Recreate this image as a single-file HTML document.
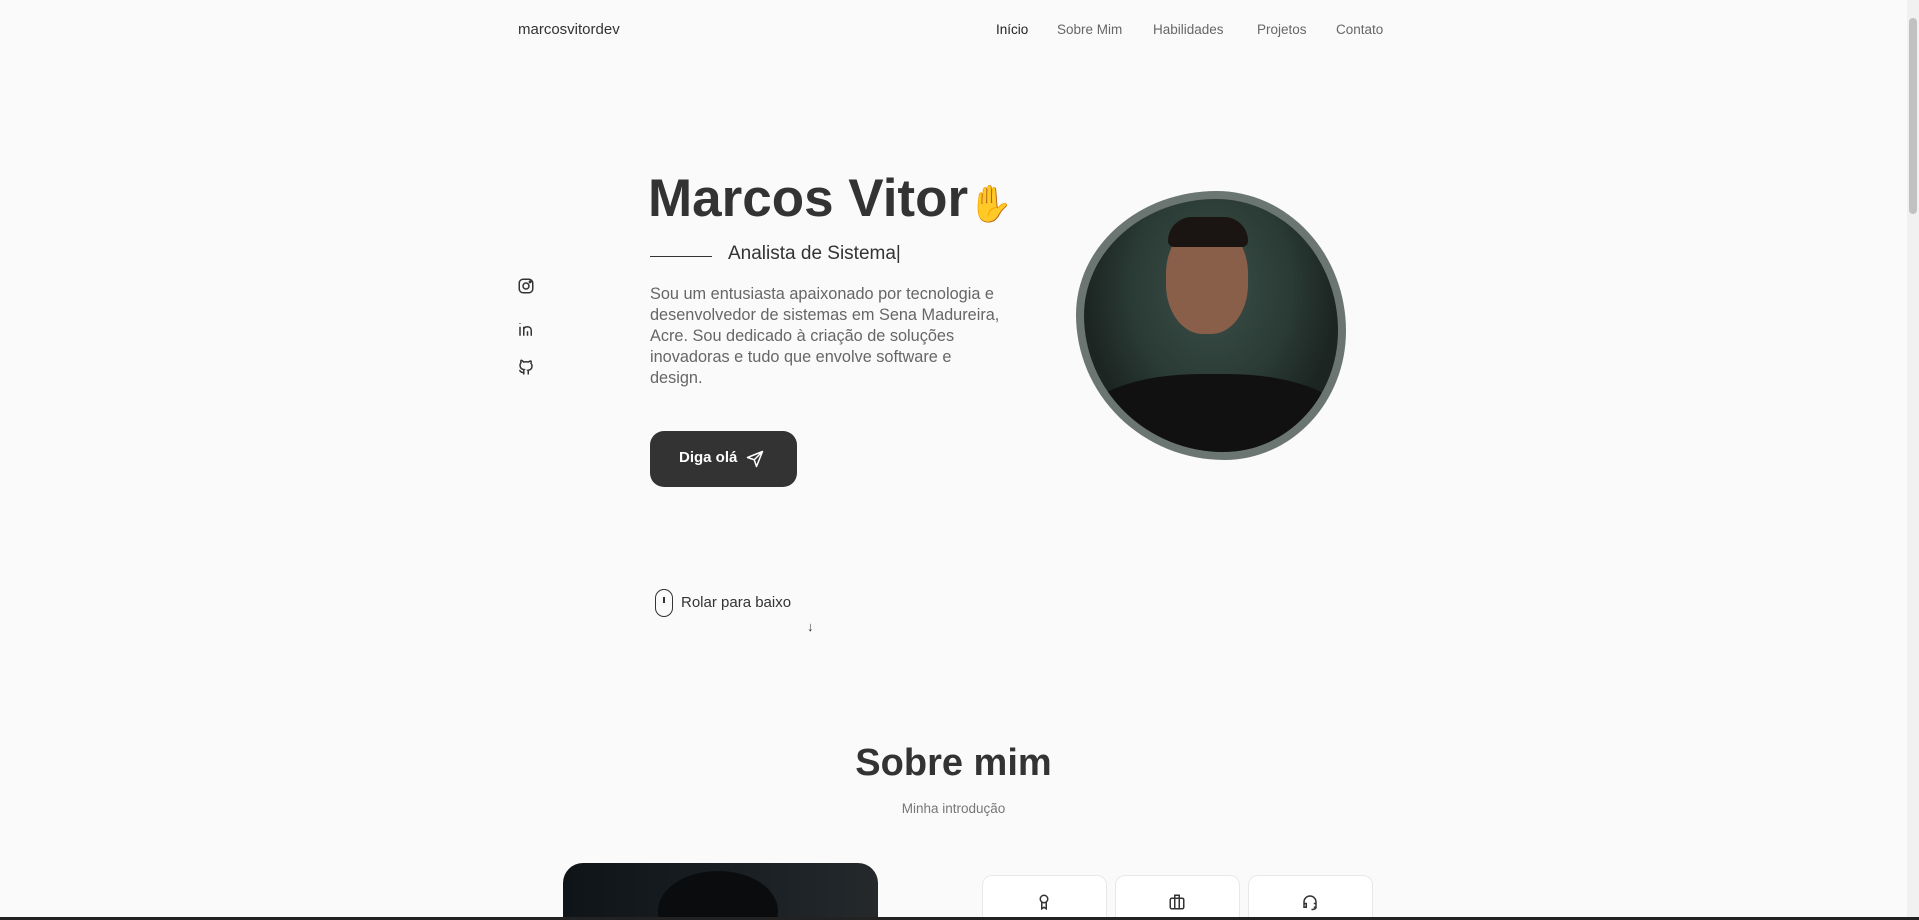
<!DOCTYPE html>
<html style="height:920px;overflow:hidden"><head><meta charset="utf-8"><style>
*{margin:0;padding:0;box-sizing:border-box}
body{width:1919px;height:920px;overflow:hidden;background:#fafafa;font-family:"Liberation Sans",sans-serif;color:#333;position:relative}
.a{position:absolute;white-space:nowrap}
.nav a{position:absolute;top:22px;font-size:13.5px;color:#666;text-decoration:none}
</style></head><body>
<div class="a" style="left:518px;top:21px;font-size:15px;color:#333">marcosvitordev</div>
<div class="nav">
<a style="left:996px;color:#222">Início</a>
<a style="left:1057px">Sobre Mim</a>
<a style="left:1153px">Habilidades</a>
<a style="left:1257px">Projetos</a>
<a style="left:1336px">Contato</a>
</div>
<div class="a" style="left:648px;top:168px;font-size:53px;font-weight:bold;color:#333">Marcos Vitor<span style="font-size:36px;color:#f5c542">✋</span></div>
<div class="a" style="left:650px;top:256px;width:62px;height:1px;background:#333"></div>
<div class="a" style="left:728px;top:243px;font-size:19px;color:#333">Analista de Sistema<span style="font-weight:300">|</span></div>
<div class="a" style="left:650px;top:284px;width:352px;white-space:normal;font-size:16.3px;line-height:21px;color:#666">Sou um entusiasta apaixonado por tecnologia e desenvolvedor de sistemas em Sena Madureira, Acre. Sou dedicado à criação de soluções inovadoras e tudo que envolve software e design.</div>
<div class="a" style="left:650px;top:431px;width:147px;height:56px;background:#333;border-radius:14px;color:#fff;font-size:15px;font-weight:bold;padding:18px 0 0 29px">Diga olá
<svg style="position:absolute;left:96px;top:19px" width="18" height="18" viewBox="0 0 24 24" fill="none" stroke="#fff" stroke-width="2" stroke-linejoin="round"><path d="M22 2L2 10l9 3 3 9z M11 13l11-11"/></svg></div>
<svg class="a" style="left:517px;top:277px" width="18" height="18" viewBox="0 0 24 24" fill="none" stroke="#333" stroke-width="2"><rect x="3" y="3" width="18" height="18" rx="5"/><circle cx="12" cy="12" r="4"/><circle cx="17.5" cy="6.5" r="1" fill="#333"/></svg>
<svg class="a" style="left:517px;top:320px" width="18" height="18" viewBox="0 0 24 24" fill="none" stroke="#333" stroke-width="2"><path d="M4 9v12M4 4v1M9 21V9M9 13c0-3 2-4 5-4s5 2 5 5v7M14 21v-6"/></svg>
<svg class="a" style="left:517px;top:358px" width="18" height="18" viewBox="0 0 24 24" fill="none" stroke="#333" stroke-width="2"><path d="M9 19c-4 1.5-4-2-6-2.5M15 22v-3.5c0-1 .1-1.4-.5-2 2.8-.3 5.5-1.4 5.5-6a4.6 4.6 0 0 0-1.3-3.2 4.2 4.2 0 0 0-.1-3.2s-1.1-.3-3.5 1.3a12 12 0 0 0-6.2 0C6.5 2.8 5.4 3.1 5.4 3.1a4.2 4.2 0 0 0-.1 3.2A4.6 4.6 0 0 0 4 9.5c0 4.6 2.7 5.7 5.5 6-.6.6-.6 1.2-.5 2V22"/></svg>
<div class="a" style="left:1076px;top:191px;width:270px;height:269px;border-radius:52% 48% 45% 55%/46% 52% 48% 54%;background:#6b7572;padding:8px">
<div style="width:100%;height:100%;border-radius:52% 48% 45% 55%/46% 52% 48% 54%;background:radial-gradient(ellipse at 50% 35%,#3c5048 0%,#2a3a35 45%,#1c2522 70%),#223;overflow:hidden;position:relative">
<div style="position:absolute;left:82px;top:25px;width:82px;height:110px;border-radius:45%;background:#8a5f4a"></div>
<div style="position:absolute;left:84px;top:18px;width:80px;height:30px;border-radius:40px 40px 10px 10px;background:#1a1512"></div>
<div style="position:absolute;left:0;top:175px;width:260px;height:100px;border-radius:45% 45% 0 0;background:#111"></div>
</div></div>
<div class="a" style="left:655px;top:589px;width:18px;height:28px;border:1.6px solid #333;border-radius:9px"><div style="position:absolute;left:7px;top:7px;width:1.5px;height:6px;background:#333"></div></div>
<div class="a" style="left:681px;top:594px;font-size:15px;color:#333">Rolar para baixo</div>
<div class="a" style="left:807px;top:619px;font-size:13px;color:#333">↓</div>
<div class="a" style="left:0;width:1907px;top:742px;text-align:center;font-size:38px;font-weight:bold;color:#333">Sobre mim</div>
<div class="a" style="left:0;width:1907px;top:801px;text-align:center;font-size:13.5px;color:#777">Minha introdução</div>
<div class="a" style="left:563px;top:863px;width:315px;height:54px;border-radius:20px 20px 0 0;background:linear-gradient(90deg,#0e1418,#1a2024 60%,#25292c);overflow:hidden">
<div style="position:absolute;left:95px;top:8px;width:120px;height:80px;border-radius:50%;background:#0a0c0e"></div></div>
<div class="a" style="left:982px;top:875px;width:125px;height:42px;border:1px solid #e8e8e8;border-bottom:none;border-radius:10px 10px 0 0;background:#fff"></div>
<div class="a" style="left:1115px;top:875px;width:125px;height:42px;border:1px solid #e8e8e8;border-bottom:none;border-radius:10px 10px 0 0;background:#fff"></div>
<div class="a" style="left:1248px;top:875px;width:125px;height:42px;border:1px solid #e8e8e8;border-bottom:none;border-radius:10px 10px 0 0;background:#fff"></div>
<svg class="a" style="left:1035px;top:892px" width="18" height="20" viewBox="0 0 24 24" fill="none" stroke="#333" stroke-width="2"><circle cx="12" cy="8" r="5"/><path d="M9 12v9l3-2 3 2v-9"/></svg>
<svg class="a" style="left:1168px;top:892px" width="18" height="20" viewBox="0 0 24 24" fill="none" stroke="#333" stroke-width="2"><rect x="3" y="7" width="18" height="14" rx="2"/><path d="M9 7V3h6v4M9 7v14M15 7v14"/></svg>
<svg class="a" style="left:1301px;top:892px" width="18" height="20" viewBox="0 0 24 24" fill="none" stroke="#333" stroke-width="2"><path d="M4 15v-3a8 8 0 0 1 16 0v3M4 14h3v5H4zM17 14h3v5h-3M20 19c0 2-2 3-6 3"/></svg>
<div class="a" style="left:0;top:917px;width:1919px;height:3px;background:#222"></div>
<div class="a" style="left:1907px;top:0;width:12px;height:917px;background:#f1f1f1"></div>
<div class="a" style="left:1909px;top:18px;width:8px;height:196px;background:#c1c1c1;border-radius:4px"></div>
</body></html>
